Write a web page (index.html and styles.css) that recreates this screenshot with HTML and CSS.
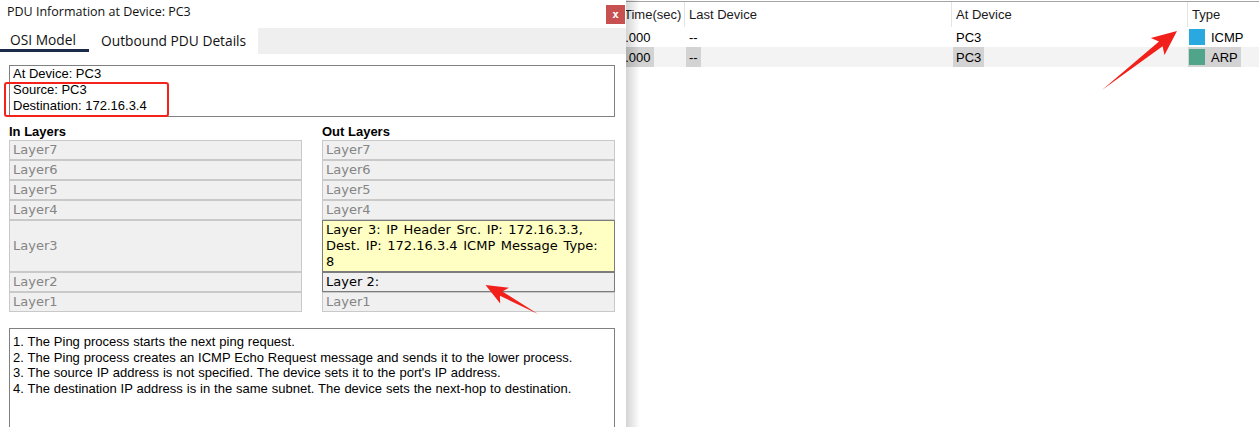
FILE: index.html
```html
<!DOCTYPE html>
<html>
<head>
<meta charset="utf-8">
<link rel="stylesheet" href="styles.css">
</head>
<body>
<div class="screen">
  <div class="dialog">
    <div class="titlebar">
      <span class="title">PDU Information at Device: PC3</span>
      <span class="close">x</span>
    </div>
    <div class="tabs">
      <div class="tab active">OSI Model</div>
      <div class="tab">Outbound PDU Details</div>
      <div class="tab-fill"></div>
    </div>
    <div class="content">
      <div class="info">
        <div>At Device: PC3</div>
        <div>Source: PC3</div>
        <div>Destination: 172.16.3.4</div>
      </div>
      <div class="layers">
        <div class="col">
          <h3 class="col-title">In Layers</h3>
          <div class="layer">Layer7</div>
          <div class="layer">Layer6</div>
          <div class="layer">Layer5</div>
          <div class="layer">Layer4</div>
          <div class="layer tall">Layer3</div>
          <div class="layer">Layer2</div>
          <div class="layer">Layer1</div>
        </div>
        <div class="col">
          <h3 class="col-title">Out Layers</h3>
          <div class="layer">Layer7</div>
          <div class="layer">Layer6</div>
          <div class="layer">Layer5</div>
          <div class="layer">Layer4</div>
          <div class="layer tall active">Layer 3: IP Header Src. IP: 172.16.3.3,<br>Dest. IP: 172.16.3.4 ICMP Message Type:<br>8</div>
          <div class="layer current">Layer 2:</div>
          <div class="layer">Layer1</div>
        </div>
      </div>
      <div class="desc">
        <div>1. The Ping process starts the next ping request.</div>
        <div>2. The Ping process creates an ICMP Echo Request message and sends it to the lower process.</div>
        <div>3. The source IP address is not specified. The device sets it to the port's IP address.</div>
        <div>4. The destination IP address is in the same subnet. The device sets the next-hop to destination.</div>
      </div>
    </div>
  </div>

  <div class="pane">
    <div class="grid">
      <div class="hcell first"><span class="clip">Time(sec)</span></div>
      <div class="hcell">Last Device</div>
      <div class="hcell">At Device</div>
      <div class="hcell">Type</div>

      <div class="cell"><span class="lbl time">0.000</span></div>
      <div class="cell"><span class="lbl">--</span></div>
      <div class="cell"><span class="lbl">PC3</span></div>
      <div class="cell"><span class="lbl type"><span class="sq icmp"></span>ICMP</span></div>

      <div class="cell alt"><span class="lbl sel time">0.000</span></div>
      <div class="cell alt"><span class="lbl sel">--</span></div>
      <div class="cell alt"><span class="lbl sel">PC3</span></div>
      <div class="cell alt"><span class="lbl sel type"><span class="sq arp"></span>ARP</span></div>
    </div>
  </div>

  <div class="redbox"></div>
  <svg class="arrows" width="1259" height="427" viewBox="0 0 1259 427">
    <polygon points="1102,90 1162.6,46.3 1164.5,55 1177,31 1150.8,38 1159,41.5" fill="#f2201a"/>
    <polygon points="538,314 502.3,291.4 509,287.8 485.5,285 500.2,303.5 499.9,295.8" fill="#f2201a"/>
  </svg>
</div>
</body>
</html>
```

FILE: styles.css
```css
* { box-sizing: border-box; }

body {
  margin: 0;
  background: #fff;
  font-family: "Liberation Sans", Arial, sans-serif;
  color: #000;
}

.screen {
  position: relative;
  width: 1259px;
  height: 427px;
  overflow: hidden;
  display: flex;
}

/* ---------- dialog ---------- */
.dialog {
  width: 626px;
  flex: none;
  background: #fff;
  display: flex;
  flex-direction: column;
}

.dialog > * {
  flex: none;
}

.titlebar {
  height: 28px;
  display: flex;
  justify-content: space-between;
  align-items: flex-start;
  padding: 0 1px 0 7px;
}

.title {
  font-family: "Open Sans", sans-serif;
  font-size: 12.5px;
  line-height: 24px;
  color: #111;
}

.close {
  width: 19px;
  height: 19px;
  margin-top: 5px;
  background: #c75050;
  color: #fff;
  font: bold 11px/19px "DejaVu Sans Mono", monospace;
  text-align: center;
}

.tabs {
  height: 26px;
  display: flex;
}

.tab {
  height: 26px;
  font-family: "Open Sans", sans-serif;
  font-size: 13.75px;
  line-height: 26px;
  padding: 0 12px;
  color: #111;
  background: #fff;
}

.tab.active {
  width: 89px;
  padding-left: 10px;
  height: 24px;
  line-height: 24px;
  border-bottom: 3px solid #1c2b4a;
}

.tab-fill {
  flex: 1;
  background: #efefef;
}

.content {
  padding: 11px 11px 0 9px;
}

.info {
  height: 52px;
  border: 1px solid #808080;
  padding: 0 3px;
  font-size: 13px;
  line-height: 16px;
}

.layers {
  margin-top: 7px;
  display: grid;
  grid-template-columns: 293px 293px;
  column-gap: 20px;
}

.col-title {
  margin: 0;
  font: bold 13px/16px "Liberation Sans", Arial, sans-serif;
}

.layer {
  height: 20px;
  border: 1px solid #c9c9c9;
  background: #f0f0f0;
  color: #858585;
  font: 13px/18px "DejaVu Sans", Verdana, sans-serif;
  padding-left: 3px;
  display: flex;
  align-items: center;
}

.layer.tall {
  height: 52px;
}

.layer.active {
  display: block;
  background: #ffffc4;
  border-color: #7c7c7c;
  color: #000;
  line-height: 16px;
  padding-top: 1px;
  word-spacing: 1.5px;
}

.layer.current {
  border-color: #7c7c7c;
  color: #000;
}

.desc {
  margin-top: 16px;
  height: 120px;
  border: 1px solid #808080;
  padding: 5px 3px 0 3px;
  font-size: 13px;
  line-height: 15.7px;
  word-spacing: 0.3px;
}

/* ---------- right pane ---------- */
.pane {
  flex: 1;
  position: relative;
  padding-top: 1px;
  overflow: hidden;
}

.pane::before {
  content: "";
  position: absolute;
  left: 0;
  top: 0;
  bottom: 0;
  width: 14px;
  background: linear-gradient(to right, rgba(0,0,0,0.17), rgba(0,0,0,0));
  z-index: 2;
}

.grid {
  border-top: 1px solid #a3a3a3;
  display: grid;
  grid-template-columns: 58px 267px 236px 1fr;
  grid-template-rows: 25px 20px 20px;
  font-size: 13px;
}

.hcell {
  height: 25px;
  line-height: 25px;
  padding-left: 4px;
  border-left: 1px solid #e4e4e4;
  color: #1a1a1a;
  white-space: nowrap;
}

.hcell.first {
  border-left: none;
  padding-left: 0;
  overflow: hidden;
}

.clip {
  margin-left: -2px;
}

.cell {
  height: 20px;
  padding-left: 2px;
  white-space: nowrap;
}

.cell.alt {
  background: #f3f3f3;
}

.lbl {
  display: inline-flex;
  align-items: center;
  height: 20px;
  padding: 0 3px;
}

.lbl.time {
  margin-left: -13px;
}

.lbl.sel {
  background: #d3d3d3;
}

.lbl.type {
  padding: 0 3px 0 1px;
  margin-left: -1px;
}

.sq {
  width: 16px;
  height: 16px;
  margin-right: 6px;
}

.sq.icmp { background: #2aa9e0; }
.sq.arp { background: #4fa489; }

/* ---------- annotations ---------- */
.redbox {
  position: absolute;
  left: 4px;
  top: 82px;
  width: 165px;
  height: 35px;
  border: 2.5px solid #f5211b;
  border-radius: 3px;
}

.arrows {
  position: absolute;
  left: 0;
  top: 0;
  pointer-events: none;
}
```
